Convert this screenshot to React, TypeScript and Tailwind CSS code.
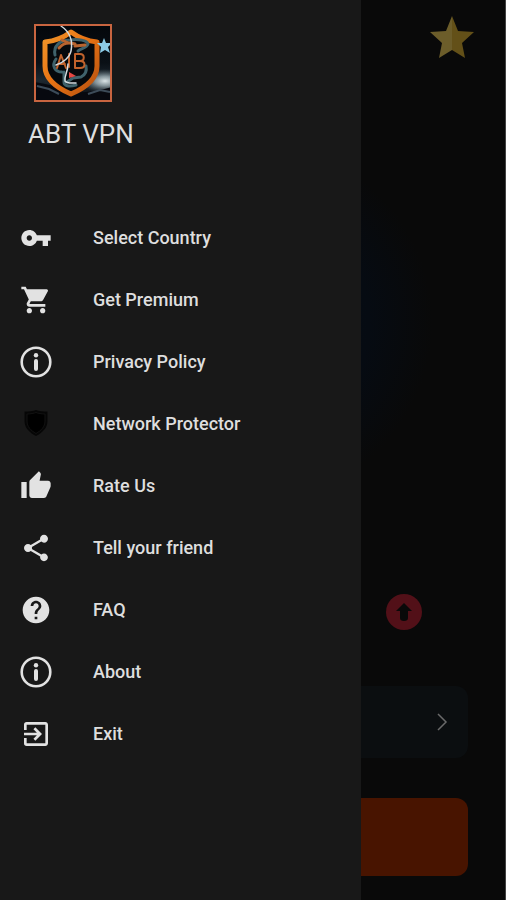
import React from "react";

type IconName = "key" | "cart" | "info" | "shield" | "thumb" | "share" | "help" | "exit";

const paths: Record<Exclude<IconName, "info" | "shield">, string> = {
  key: "M12.65 10C11.83 7.67 9.61 6 7 6c-3.31 0-6 2.69-6 6s2.69 6 6 6c2.61 0 4.83-1.67 5.65-4H17v4h4v-4h2v-4H12.65zM7 14c-1.1 0-2-.9-2-2s.9-2 2-2 2 .9 2 2-.9 2-2 2z",
  cart: "M7 18c-1.1 0-1.99.9-1.99 2S5.9 22 7 22s2-.9 2-2-.9-2-2-2zM1 2v2h2l3.6 7.59-1.35 2.45c-.16.28-.25.61-.25.96 0 1.1.9 2 2 2h12v-2H7.42c-.14 0-.25-.11-.25-.25l.03-.12.9-1.63h7.45c.75 0 1.41-.41 1.75-1.03l3.58-6.49A1.003 1.003 0 0 0 20 4H5.21l-.94-2H1zm16 16c-1.1 0-1.99.9-1.99 2s.89 2 1.99 2 2-.9 2-2-.9-2-2-2z",
  thumb: "M1 21h4V9H1v12zm22-11c0-1.1-.9-2-2-2h-6.31l.95-4.57.03-.32c0-.41-.17-.79-.44-1.06L14.17 1 7.59 7.59C7.22 7.95 7 8.45 7 9v10c0 1.1.9 2 2 2h9c.83 0 1.54-.5 1.84-1.22l3.02-7.05c.09-.23.14-.47.14-.73v-2z",
  share: "M18 16.08c-.76 0-1.44.3-1.96.77L8.91 12.7c.05-.23.09-.46.09-.7s-.04-.47-.09-.7l7.05-4.11c.54.5 1.25.81 2.04.81 1.66 0 3-1.34 3-3s-1.34-3-3-3-3 1.34-3 3c0 .24.04.47.09.7L8.04 9.81C7.5 9.31 6.79 9 6 9c-1.66 0-3 1.34-3 3s1.34 3 3 3c.79 0 1.5-.31 2.04-.81l7.12 4.16c-.05.21-.08.43-.08.65 0 1.61 1.31 2.92 2.92 2.92s2.92-1.31 2.92-2.92-1.31-2.92-2.92-2.92z",
  help: "M12 2C6.48 2 2 6.48 2 12s4.48 10 10 10 10-4.48 10-10S17.52 2 12 2zm1 17h-2v-2h2v2zm2.07-7.75-.9.92C13.45 12.9 13 13.5 13 15h-2v-.5c0-1.1.45-2.1 1.17-2.83l1.24-1.26c.37-.36.59-.86.59-1.41 0-1.1-.9-2-2-2s-2 .9-2 2H8c0-2.21 1.79-4 4-4s4 1.79 4 4c0 .88-.36 1.68-.93 2.25z",
  exit: "M10.09 15.59 11.5 17l5-5-5-5-1.41 1.41L12.67 11H3v2h9.67l-2.58 2.59zM19 3H5a2 2 0 0 0-2 2v4h2V5h14v14H5v-4H3v4a2 2 0 0 0 2 2h14c1.1 0 2-.9 2-2V5c0-1.1-.9-2-2-2z",
};

function MenuIcon({ name }: { name: IconName }) {
  if (name === "info") {
    return (
      <svg viewBox="0 0 32 32" className="size-8 shrink-0" fill="none" stroke="#e2e2e2" aria-hidden="true">
        <circle cx="16" cy="16" r="14.3" strokeWidth="2.6" />
        <circle cx="16" cy="9.2" r="2.2" fill="#e2e2e2" stroke="none" />
        <path d="M16 15v8" strokeWidth="4" strokeLinecap="round" />
      </svg>
    );
  }
  if (name === "shield") {
    return (
      <svg viewBox="0 0 32 32" className="size-8 shrink-0" aria-hidden="true">
        <path d="M16 2C13 3 9 3.500 4.500 3.500V13c0 7 5 11.500 11.500 15 6.500-3.500 11.500-8 11.500-15V3.500C23 3.500 19 3 16 2z" fill="#060606" />
        <path d="M16 4.500c-2.500 1-5 1.300-9 1.500V13c0 5.800 3.800 9.500 9 12.500 5.200-3 9-6.700 9-12.500V6c-4-.2-6.500-.5-9-1.500z" fill="#000" stroke="#121212" strokeWidth="1" />
      </svg>
    );
  }
  return (
    <svg viewBox="0 0 24 24" className="size-8 shrink-0" fill="#e2e2e2" aria-hidden="true">
      <path d={paths[name]} />
    </svg>
  );
}

function Logo() {
  return (
    <svg viewBox="0 0 78 78" className="size-[78px]" role="img" aria-label="ABT VPN logo">
      <defs>
        <linearGradient id="sky" x1="0" y1="0" x2="0" y2="1">
          <stop offset="0" stopColor="#04070b" />
          <stop offset="0.5" stopColor="#0a1016" />
          <stop offset="0.72" stopColor="#1d2830" />
          <stop offset="1" stopColor="#07090d" />
        </linearGradient>
        <linearGradient id="rim" x1="0" y1="0" x2="1" y2="1">
          <stop offset="0" stopColor="#f0962a" />
          <stop offset="0.45" stopColor="#e97414" />
          <stop offset="1" stopColor="#b5500f" />
        </linearGradient>
        <radialGradient id="glow">
          <stop offset="0" stopColor="#dce6e8" />
          <stop offset="0.4" stopColor="#9fb0b6" stopOpacity="0.8" />
          <stop offset="1" stopColor="#60737c" stopOpacity="0" />
        </radialGradient>
      </defs>
      <rect width="78" height="78" fill="url(#sky)" />
      <ellipse cx="71" cy="57" rx="24" ry="12" fill="url(#glow)" />
      <path d="M0 58q18 2 35 10 20 2 43-5v15H0z" fill="#07090f" />
      <path d="M3 62l12 3 10 5M54 70l12-4 10 2" stroke="#3c4b58" strokeWidth="2" fill="none" />
      <path d="M37 8C29 14 21 17 11 18v24c0 13 12 22 26 28 14-6 26-15 26-28V18C53 17 45 14 37 8z" fill="#06090c" stroke="url(#rim)" strokeWidth="5" strokeLinejoin="round" />
      <g fill="none" strokeLinecap="round" strokeLinejoin="round">
        <path d="M21 31c-2-9 5-15 15-15 8-1 17 0 18 4-1 4-7 4-10 7M22 35c-5 7-1 13 6 13M30 48v10c0 4 5 5 12 3M33 58l6-4 8-1c4-2 6-6 5-11" stroke="#3f626b" strokeWidth="3" />
        <path d="M25 24c4-5 10-6 16-4M41 22l10-1M28 16l6 3" stroke="#b8642f" strokeWidth="3" />
        <path d="M23 44l4-13 5 13M25 40h6M41 30v14h5c6 0 6-7 0-7 5 0 5-7 0-7zM41 37h5M35 30v13" stroke="#c0622c" strokeWidth="2" />
        <path d="M27 2c9 6 12 15 10 25-1 6-8 12-15 14M34 40c0 8-4 12-3 17 2 3 7 2 11 2" stroke="#d3dce1" strokeWidth="1.500" />
      </g>
      <path d="M35 48l7 4-7 2z" fill="#e74843" />
      <path d="M70 14l2 5 6 0-4 4 2 6-5-3-5 3 1-6-4-4h5z" fill="#8bcbe7" />
      <rect x="1" y="1" width="76" height="76" fill="none" stroke="#c96540" strokeWidth="2" />
    </svg>
  );
}

const items: { icon: IconName; label: string }[] = [
  { icon: "key", label: "Select Country" },
  { icon: "cart", label: "Get Premium" },
  { icon: "info", label: "Privacy Policy" },
  { icon: "shield", label: "Network Protector" },
  { icon: "thumb", label: "Rate Us" },
  { icon: "share", label: "Tell your friend" },
  { icon: "help", label: "FAQ" },
  { icon: "info", label: "About" },
  { icon: "exit", label: "Exit" },
];

export default function App() {
  return (
    <div className="relative min-h-screen overflow-hidden border-r border-[#424242] bg-[#090909] font-[Roboto,sans-serif]">
      <main className="flex min-h-screen flex-col bg-[radial-gradient(ellipse_180px_180px_at_50%_322px,#050d18_0%,#060b12_65%,#090909_100%)] px-[37px] pb-6">
        <header className="-mr-1.5 flex justify-end pt-4">
          <button aria-label="Favorite" className="size-11">
            <svg viewBox="0 0 44 44" className="size-11" aria-hidden="true">
              <path d="M22 0l6 15 16 1-12 11 3 15-13-8z" fill="#635018" />
              <path d="M22 0l-6 15-16 1 12 11-3 15 13-8z" fill="#6c5d2a" />
            </svg>
          </button>
        </header>
        <div className="mt-auto flex justify-end pr-[46px]">
          <svg viewBox="0 0 36 36" className="size-9" role="img" aria-label="Upload">
            <circle cx="18" cy="18" r="18" fill="#521018" />
            <path d="M18 9l8 8h-4v7q0 3-4 3t-4-3v-7h-4z" fill="#090909" />
          </svg>
        </div>
        <button aria-label="Choose server" className="mt-14 flex h-[72px] items-center justify-end rounded-xl bg-[#0b0e10] pr-4">
          <svg viewBox="0 0 20 20" className="size-5" fill="none" stroke="#6a6a6a" strokeWidth="1.500" aria-hidden="true">
            <path d="M6 2l8 8-8 8" />
          </svg>
        </button>
        <button aria-label="Connect" className="mt-10 h-[78px] rounded-xl bg-[#481400]" />
      </main>

      <aside className="absolute inset-y-0 left-0 w-[361px] max-w-full bg-[#181818] text-[#dedede]">
        <div className="px-7 pt-6">
          <div className="pl-1.5">
            <Logo />
          </div>
          <h1 className="mt-4 text-[26px] leading-8">ABT VPN</h1>
        </div>
        <nav aria-label="Main menu" className="mt-[57px]">
          <ul>
            {items.map((item) => (
              <li key={item.label}>
                <button className="flex h-[62px] w-full items-center gap-[41px] px-5 text-left text-[18px] leading-6 font-medium">
                  <MenuIcon name={item.icon} />
                  {item.label}
                </button>
              </li>
            ))}
          </ul>
        </nav>
      </aside>
    </div>
  );
}
